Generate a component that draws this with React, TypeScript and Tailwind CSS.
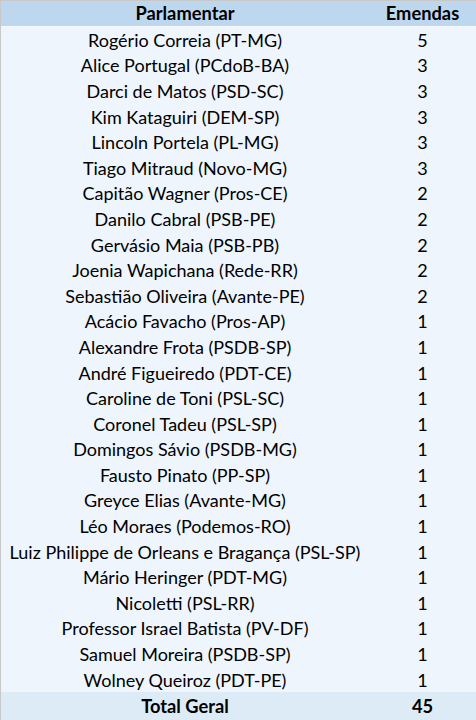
// Tabela de emendas por parlamentar
const rows: [string, number][] = [
  ['Rogério Correia (PT-MG)', 5],
  ['Alice Portugal (PCdoB-BA)', 3],
  ['Darci de Matos (PSD-SC)', 3],
  ['Kim Kataguiri (DEM-SP)', 3],
  ['Lincoln Portela (PL-MG)', 3],
  ['Tiago Mitraud (Novo-MG)', 3],
  ['Capitão Wagner (Pros-CE)', 2],
  ['Danilo Cabral (PSB-PE)', 2],
  ['Gervásio Maia (PSB-PB)', 2],
  ['Joenia Wapichana (Rede-RR)', 2],
  ['Sebastião Oliveira (Avante-PE)', 2],
  ['Acácio Favacho (Pros-AP)', 1],
  ['Alexandre Frota (PSDB-SP)', 1],
  ['André Figueiredo (PDT-CE)', 1],
  ['Caroline de Toni (PSL-SC)', 1],
  ['Coronel Tadeu (PSL-SP)', 1],
  ['Domingos Sávio (PSDB-MG)', 1],
  ['Fausto Pinato (PP-SP)', 1],
  ['Greyce Elias (Avante-MG)', 1],
  ['Léo Moraes (Podemos-RO)', 1],
  ['Luiz Philippe de Orleans e Bragança (PSL-SP)', 1],
  ['Mário Heringer (PDT-MG)', 1],
  ['Nicoletti (PSL-RR)', 1],
  ['Professor Israel Batista (PV-DF)', 1],
  ['Samuel Moreira (PSDB-SP)', 1],
  ['Wolney Queiroz (PDT-PE)', 1],
]

export default function App() {
  return (
    <div
      className="w-[476px] h-[720px] overflow-hidden bg-[#eef5fc] border-t border-l border-[#c8c8c8] text-black text-[18px]"
      style={{ fontFamily: 'Lato, "Open Sans", sans-serif' }}
    >
      {/* Cabeçalho */}
      <div className="flex h-[25px] bg-[#bdd7ee] font-bold text-[18.3px] leading-none">
        <div className="w-[368px] flex items-center justify-center">Parlamentar</div>
        <div className="flex-1 flex items-center justify-center">Emendas</div>
      </div>
      <div className="h-px bg-[#f6faff]" />

      {rows.map(([name, n]) => (
        <div key={name} className="flex h-[25.6px] leading-none">
          <div className="w-[368px] flex items-center justify-center">{name}</div>
          <div className="flex-1 flex items-center justify-center">{n}</div>
        </div>
      ))}

      {/* Total */}
      <div className="flex h-[28px] bg-[#ddebf7] font-bold text-[18.3px] leading-none">
        <div className="w-[368px] flex items-center justify-center">Total Geral</div>
        <div className="flex-1 flex items-center justify-center">45</div>
      </div>
    </div>
  )
}
